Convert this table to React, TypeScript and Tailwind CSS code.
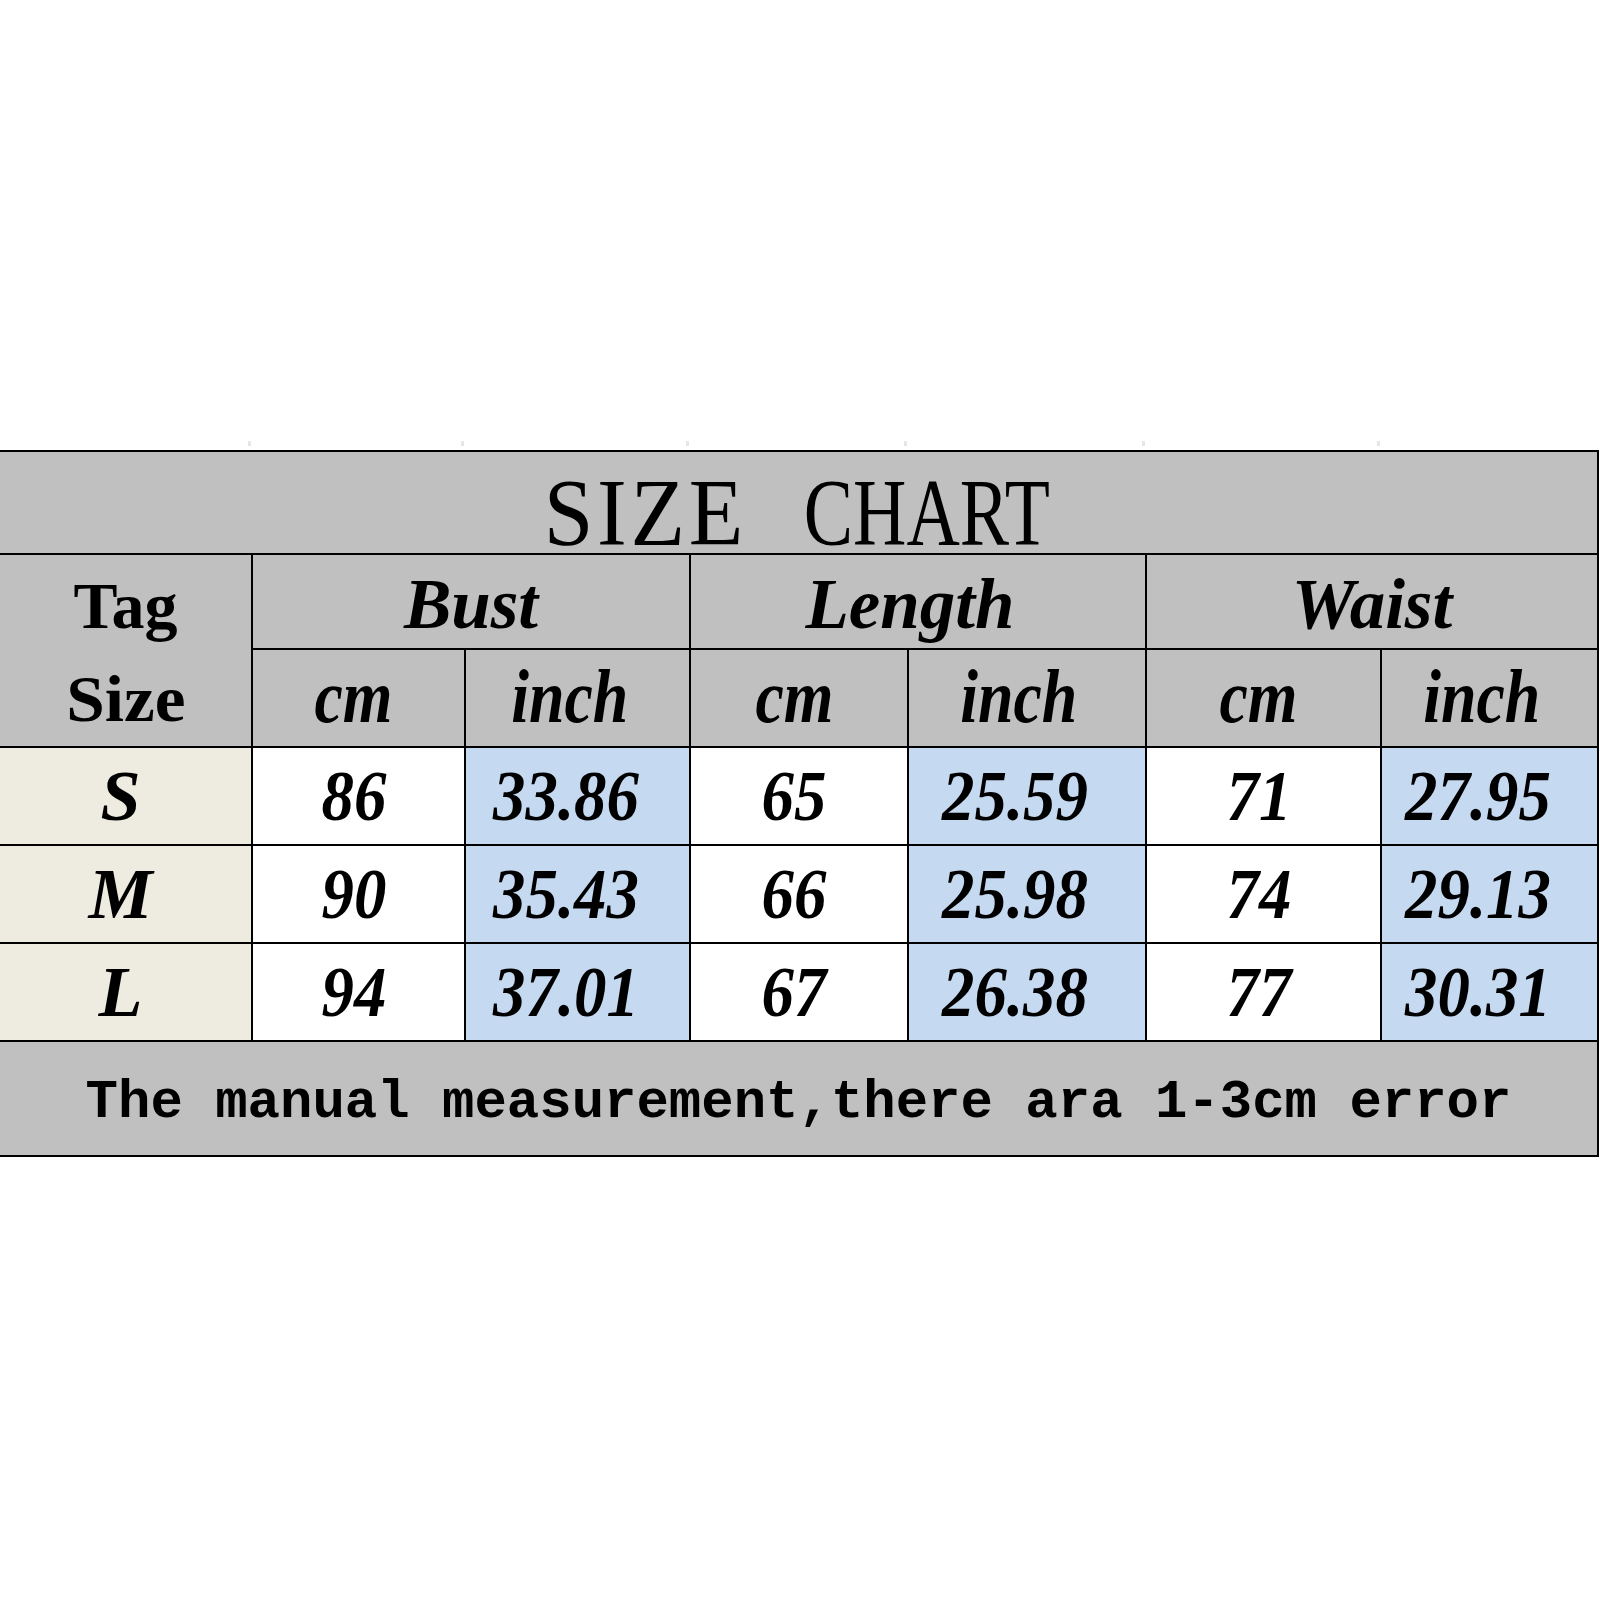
// Tabulka velikostí: šedé záhlaví, béžové štítky, modré sloupce s palci.
const cols = "grid-cols-[251px_211px_223px_216px_236px_233px_215px]";

const rows = [
  { tag: "S", v: ["86", "33.86", "65", "25.59", "71", "27.95"] },
  { tag: "M", v: ["90", "35.43", "66", "25.98", "74", "29.13"] },
  { tag: "L", v: ["94", "37.01", "67", "26.38", "77", "30.31"] },
];

const serif = "font-['Liberation_Serif',_'Times_New_Roman',_serif]";

function Num({ children }: { children: string }) {
  return (
    <span className={`inline-block scale-x-[0.9] whitespace-nowrap text-[72px] font-bold italic leading-none ${serif}`}>
      {children}
    </span>
  );
}

function Unit({ children }: { children: string }) {
  return (
    <div
      className={`flex h-[96px] items-center justify-center bg-[#c0c0c0] pb-[4px] ${
        children === "inch" ? "pr-[16px]" : "pr-[10px]"
      }`}
    >
      <span className={`inline-block scale-x-[0.84] whitespace-nowrap text-[76px] font-bold italic leading-none ${serif}`}>
        {children}
      </span>
    </div>
  );
}

function Group({ children, shift = "" }: { children: string; shift?: string }) {
  return (
    <div className={`col-span-2 flex h-[93px] items-center justify-center bg-[#c0c0c0] pt-[6px] ${shift}`}>
      <span className={`text-[71px] font-bold italic leading-none ${serif}`}>{children}</span>
    </div>
  );
}

export default function App() {
  return (
    <div className="min-h-[1600px] w-[1600px] bg-white pt-[441px] text-black">
      {/* zbytky mřížky nad tabulkou */}
      <div className={`grid h-[5px] ${cols} gap-x-[2px]`}>
        {Array.from({ length: 7 }).map((_, i) => (
          <div key={i} className={i < 6 ? "border-r-[3px] border-[#e6e6e6]" : ""} />
        ))}
      </div>

      <div className={`mt-[4px] grid w-[1599px] ${cols} gap-[2px] border-y-2 border-r-2 border-black bg-black`}>
        <div className="col-span-7 flex h-[101px] items-center justify-center bg-[#c0c0c0] pt-[20px]">
          <div className={`flex items-center text-[96px] font-normal leading-none ${serif}`}>
            <span className="flex w-[201px] justify-center">
              <span className="inline-block scale-x-[0.93] whitespace-nowrap tracking-[4px]">SIZE</span>
            </span>
            <span className="w-[56px]" />
            <span className="flex w-[250px] justify-center">
              <span className="inline-block scale-x-[0.77] whitespace-nowrap">CHART</span>
            </span>
          </div>
        </div>

        <div className={`row-span-2 flex flex-col items-center justify-center bg-[#c0c0c0] pt-[2px] text-[66px] font-bold leading-[93px] ${serif}`}>
          <span>Tag</span>
          <span className="scale-x-[1.05]">Size</span>
        </div>
        <Group>Bust</Group>
        <Group shift="pr-[16px]">Length</Group>
        <Group>Waist</Group>
        <Unit>cm</Unit>
        <Unit>inch</Unit>
        <Unit>cm</Unit>
        <Unit>inch</Unit>
        <Unit>cm</Unit>
        <Unit>inch</Unit>

        {rows.map((r) => (
          <div key={r.tag} className="contents">
            <div className="flex h-[96px] items-center justify-center bg-[#eeece1] pr-[10px]">
              <span className={`text-[72px] font-bold italic leading-none ${serif}`}>{r.tag}</span>
            </div>
            {r.v.map((n, i) => (
              <div
                key={i}
                className={`flex h-[96px] items-center justify-center ${
                  i % 2 ? "bg-[#c5d9f1] pr-[24px]" : "bg-white pr-[10px]"
                }`}
              >
                <Num>{n}</Num>
              </div>
            ))}
          </div>
        ))}

        <div className="col-span-7 flex h-[113px] items-center justify-center bg-[#c0c0c0] pt-[8px]">
          <span className="whitespace-pre font-['Liberation_Mono',_'Courier_New',_monospace] text-[54px] font-bold leading-none">
            The manual measurement,there ara 1-3cm error
          </span>
        </div>
      </div>
    </div>
  );
}
